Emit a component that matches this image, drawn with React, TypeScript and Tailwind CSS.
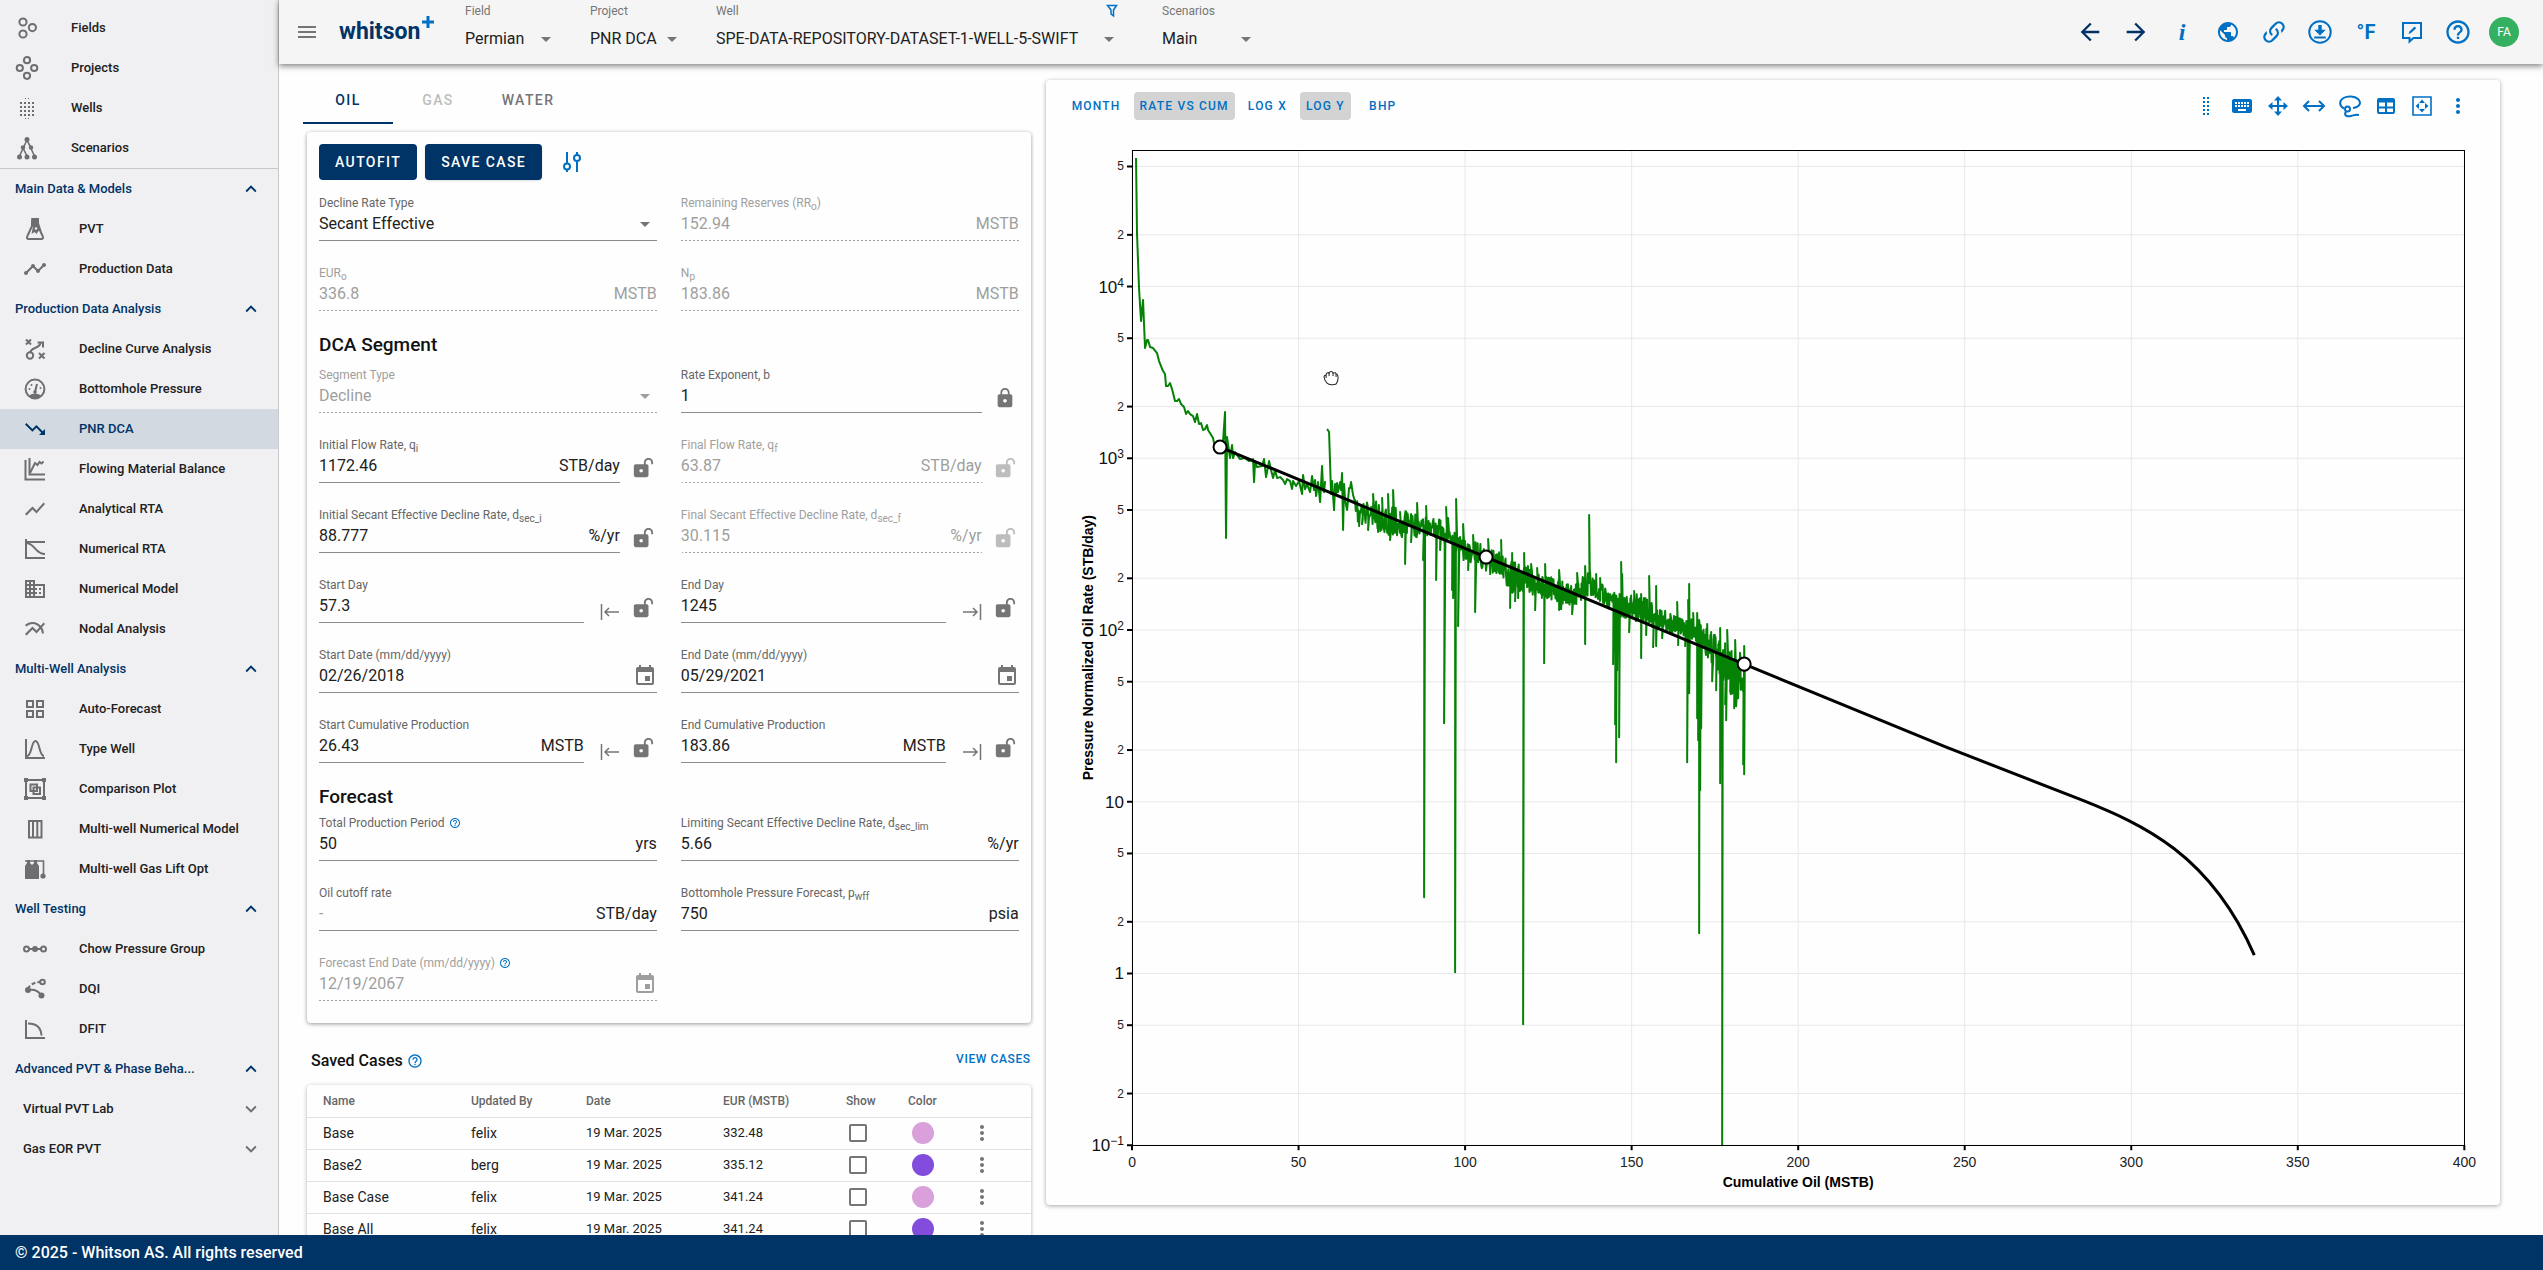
import React, { useId, useState } from 'react'
import {
  MdArrowBack,
  MdArrowDropDown,
  MdArrowForward,
  MdEvent,
  MdExpandLess,
  MdExpandMore,
  MdHelpOutline,
  MdKeyboard,
  MdLock,
  MdMenu,
  MdMoreVert,
  MdMultilineChart,
  MdPublic,
  MdShowChart,
  MdTimeline,
  MdTrendingDown,
  MdOutlineDomain,
} from 'react-icons/md'

/* ---------- icons ---------- */

interface IconProps {
  size?: number
  className?: string
  children: React.ReactNode
}

function Icon({ size = 24, className = '', children }: IconProps) {
  return (
    <svg viewBox="0 0 24 24" width={size} height={size} className={`shrink-0 ${className}`} fill="none" stroke="currentColor" strokeWidth="2" aria-hidden="true">
      {children}
    </svg>
  )
}

const FieldsIcon = () => (
  <Icon>
    <circle cx="8" cy="6" r="3.6" />
    <circle cx="17.4" cy="11.6" r="3.6" />
    <circle cx="8" cy="18" r="3.6" />
  </Icon>
)

const ProjectsIcon = () => (
  <Icon>
    <circle cx="12" cy="4.2" r="3.1" />
    <circle cx="4.8" cy="12" r="3.1" />
    <circle cx="19.2" cy="12" r="3.1" />
    <circle cx="12" cy="19.8" r="3.1" />
  </Icon>
)

const WellsIcon = () => (
  <Icon>
    <g fill="currentColor" stroke="none">
      {[5, 9, 13, 17].map((y) =>
        [5, 9, 13, 17].map((x) => <rect key={`${x}-${y}`} x={x} y={y + 1} width="2" height="2" />)
      )}
      <rect x="10" y="2" width="1" height="1" />
      <rect x="13" y="2" width="1" height="1" />
      <rect x="10" y="22" width="1" height="1" />
      <rect x="13" y="22" width="1" height="1" />
    </g>
  </Icon>
)

const ScenariosIcon = () => (
  <Icon>
    <path d="M12 4 4.500 20M12 4l7.500 16M8 12l4 8M16 12l-4-8" strokeWidth="1.600" />
    <g fill="currentColor" stroke="none">
      <circle cx="12" cy="3.500" r="2.500" />
      <circle cx="8" cy="11.500" r="2.200" />
      <circle cx="16" cy="11.500" r="2.200" />
      <circle cx="4.500" cy="21" r="2.500" />
      <circle cx="12" cy="21" r="2.500" />
      <circle cx="19.500" cy="21" r="2.500" />
    </g>
  </Icon>
)

const FlaskIcon = () => (
  <Icon>
    <path d="M9 3v6L4.200 19.500A1.600 1.600 0 0 0 5.600 22h12.800a1.600 1.600 0 0 0 1.400-2.500L15 9V3" />
    <path d="M8 1h8v5l2.500 8h-3l-2 3-2-2-3 2 1.500-8z" fill="currentColor" stroke="none" />
    <circle cx="13" cy="11.500" r="1.200" fill="#f0f0f2" stroke="none" />
  </Icon>
)

const StrategyIcon = () => (
  <Icon>
    <circle cx="7" cy="18.500" r="3.200" />
    <path d="M3 2.500l5 5M8 2.500l-5 5M16 16l5.500 5.500M21.500 16 16 21.500" />
    <path d="M7.500 15c.5-5 9-3 10-9" />
    <path d="M14.500 5.500h5.500v5" />
  </Icon>
)

const GaugeIcon = () => (
  <Icon>
    <circle cx="12" cy="12" r="9.400" />
    <path d="M12 15l2-8" />
    <path d="M5.500 19c3-3.500 10-3.500 13 0-3 4-10 4-13 0z" fill="currentColor" stroke="none" />
    <g fill="currentColor" stroke="none">
      <circle cx="12" cy="15" r="1.800" />
      <circle cx="6.500" cy="12" r="1" />
      <circle cx="8.500" cy="8" r="1" />
      <circle cx="17.500" cy="11" r="1" />
    </g>
  </Icon>
)

const FlowingIcon = () => (
  <Icon>
    <path d="M2.500 3v19.500H22M6.500 1v16.500H22" />
    <path d="M7 16l5-10 2.500 2 2-3 2 1.500 2-2" />
  </Icon>
)

const NumericalRtaIcon = () => (
  <Icon>
    <path d="M3 2v19h19M3 5h19" />
    <path d="M3 6c9 0 9 11 19 11" />
  </Icon>
)

const GridIcon = () => (
  <Icon>
    <path d="M4 4h6v6H4zM14 4h6v6h-6zM4 14h6v6H4zM14 14h6v6h-6z" />
  </Icon>
)

const BellIcon = () => (
  <Icon>
    <path d="M3 2v19h19" />
    <path d="M4 19c5 0 4-15 8.500-15S16 19 21 19" />
  </Icon>
)

const CompareIcon = () => (
  <Icon>
    <path d="M3 3h18v18H3z" />
    <path d="M7.500 7.500h6.500v6.500H7.500zM10.500 10.500H17V17h-6.500z" />
    <path d="M1 1h4v4H1zM19 1h4v4h-4zM1 19h4v4H1zM19 19h4v4h-4z" fill="currentColor" stroke="none" />
  </Icon>
)

const ColumnsIcon = () => (
  <Icon>
    <path d="M6 4h12.500v16.500H6zM10 4v16.500M14.300 4v16.500" />
  </Icon>
)

const GasLiftIcon = () => (
  <Icon>
    <path d="M2 9l2-3V3h3v3l2 2 2-2V3h3v3l2 3v13H2z" fill="currentColor" stroke="none" />
    <path d="M2 4h18.500v13" strokeWidth="1.600" />
    <circle cx="20" cy="19" r="2.600" fill="currentColor" stroke="none" />
  </Icon>
)

const ChowIcon = () => (
  <Icon>
    <path d="M6 12h12" />
    <circle cx="3.500" cy="12" r="2.500" />
    <circle cx="20.500" cy="12" r="2.500" />
    <circle cx="12" cy="12" r="3" fill="currentColor" stroke="none" />
  </Icon>
)

const DqiIcon = () => (
  <Icon>
    <path d="M5 12c1-4 7-7 12-7" strokeDasharray="4 2" />
    <path d="M5 13c6-1 10 0 13 5" />
    <circle cx="19.500" cy="5" r="2.300" />
    <circle cx="5" cy="13" r="3" fill="currentColor" stroke="none" />
    <circle cx="18.500" cy="18.500" r="3" fill="currentColor" stroke="none" />
  </Icon>
)

const DfitIcon = () => (
  <Icon>
    <path d="M3 3v18h19" />
    <path d="M5 6.500c8 0 13 4 13.500 12" />
  </Icon>
)

const LockOpenIcon = ({ muted = false }: { muted?: boolean }) => (
  <svg viewBox="0 0 24 24" width="22" height="22" className={muted ? 'text-[#bdbdbd]' : 'text-[#757575]'} fill="currentColor" aria-hidden="true">
    <path d="M18 1c-2.760 0-5 2.240-5 5v2H4c-1.100 0-2 .9-2 2v10a2 2 0 0 0 2 2h12a2 2 0 0 0 2-2V10a2 2 0 0 0-2-2h-1V6c0-1.660 1.340-3 3-3s3 1.340 3 3v2h2V6c0-2.760-2.240-5-5-5M10 13a2 2 0 1 1 0 4 2 2 0 0 1 0-4" />
  </svg>
)

const JumpIcon = ({ to }: { to: 'start' | 'end' }) => (
  <svg viewBox="0 0 20 16" width="20" height="16" className="text-[#757575]" fill="none" stroke="currentColor" strokeWidth="1.500" aria-hidden="true">
    {to === 'start' ? <path d="M1.500 0v16M19 8H5M9 4 5 8l4 4" /> : <path d="M18.500 0v16M1 8h14M11 4l4 4-4 4" />}
  </svg>
)

const LinkIcon = () => (
  <Icon size={28}>
    <path
      fill="currentColor"
      stroke="none"
      d="M10.590 13.410c.41.390.41 1.030 0 1.420-.39.390-1.030.390-1.420 0a5.003 5.003 0 0 1 0-7.070l3.540-3.540a5.003 5.003 0 0 1 7.070 0 5.003 5.003 0 0 1 0 7.070l-1.490 1.490c.01-.82-.12-1.640-.4-2.420l.47-.48a2.982 2.982 0 0 0 0-4.240 2.982 2.982 0 0 0-4.240 0l-3.530 3.530a2.982 2.982 0 0 0 0 4.240m2.820-4.240c.39-.39 1.030-.39 1.420 0a5.003 5.003 0 0 1 0 7.070l-3.540 3.540a5.003 5.003 0 0 1-7.070 0 5.003 5.003 0 0 1 0-7.070l1.490-1.490c-.01.82.12 1.640.4 2.430l-.47.470a2.982 2.982 0 0 0 0 4.240 2.982 2.982 0 0 0 4.240 0l3.530-3.530a2.982 2.982 0 0 0 0-4.240.973.973 0 0 1 0-1.420z"
    />
  </Icon>
)

const DownloadIcon = () => (
  <Icon size={28}>
    <circle cx="12" cy="12" r="9.200" strokeWidth="1.700" />
    <path d="M10.500 6h3v4H17l-5 5-5-5h3.500zM7 15.800h10v1.800H7z" fill="currentColor" stroke="none" />
  </Icon>
)

const FeedbackIcon = () => (
  <Icon size={24}>
    <path d="M3 3h18v15h-7.500L9.500 21.500V18H3z" />
    <path d="M8.500 14l1-2.500 5-5 1.700 1.700-5.200 4.800z" fill="currentColor" stroke="none" />
  </Icon>
)

const TuneIcon = () => (
  <Icon>
    <path d="M7 2v11M7 20v2M17 2v3M17 11v11" />
    <circle cx="7" cy="16.500" r="3" />
    <circle cx="17" cy="8" r="3" />
  </Icon>
)

const FilterIcon = () => (
  <svg viewBox="0 0 12 14" width="12" height="14" fill="none" stroke="#0070c4" strokeWidth="1.500" aria-hidden="true">
    <path d="M1.500 1.500h9L7.500 6v6L5 10V6z" />
  </svg>
)

const DragIcon = () => (
  <Icon>
    <g fill="currentColor" stroke="none">
      {[3, 7, 11, 15, 19].map((y) => [9, 13].map((x) => <rect key={`${x}-${y}`} x={x} y={y} width="2" height="2" />))}
    </g>
  </Icon>
)

const MoveIcon = () => (
  <Icon>
    <path d="M12 4v16M4 12h16" />
    <path d="M12 2l4 4.500H8zM12 22l4-4.500H8zM2 12l4.500-4v8zM22 12l-4.500-4v8z" fill="currentColor" stroke="none" />
  </Icon>
)

const HorizontalIcon = () => (
  <Icon>
    <path d="M2.500 12h19M7 7l-5 5 5 5M17 7l5 5-5 5" />
  </Icon>
)

const LassoIcon = () => (
  <Icon>
    <path d="M6 14.500C1 12 1 6.500 5.500 4s11-2 14.500 1 2.500 8-5 9" />
    <circle cx="9.500" cy="15" r="2.500" />
    <path d="M8 17.500c-2.500 4 1 5.500 5 4.500s4-1.500 8-1" />
  </Icon>
)

const TableIcon = () => (
  <Icon>
    <path fillRule="evenodd" fill="currentColor" stroke="none" d="M5 4h14a2 2 0 0 1 2 2v12a2 2 0 0 1-2 2H5a2 2 0 0 1-2-2V6a2 2 0 0 1 2-2zm0 4.500v4h6v-4zm8 0v4h6v-4zm-8 6V18h6v-3.500zm8 0V18h6v-3.500z" />
  </Icon>
)

const FitIcon = () => (
  <Icon>
    <path d="M3 3h18v18H3z" strokeWidth="1.600" />
    <path d="M12 5.500l3 3.500H9zM12 18.500l3-3.500H9zM5.500 12L9 9v6zM18.500 12L15 9v6z" fill="currentColor" stroke="none" />
  </Icon>
)

/* ---------- sidebar ---------- */

interface NavItem {
  label: string
  icon: React.ReactNode
}

interface NavGroup {
  title: string
  items: NavItem[]
}

const topItems: NavItem[] = [
  { label: 'Fields', icon: <FieldsIcon /> },
  { label: 'Projects', icon: <ProjectsIcon /> },
  { label: 'Wells', icon: <WellsIcon /> },
  { label: 'Scenarios', icon: <ScenariosIcon /> },
]

const groups: NavGroup[] = [
  {
    title: 'Main Data & Models',
    items: [
      { label: 'PVT', icon: <FlaskIcon /> },
      { label: 'Production Data', icon: <MdTimeline size={24} /> },
    ],
  },
  {
    title: 'Production Data Analysis',
    items: [
      { label: 'Decline Curve Analysis', icon: <StrategyIcon /> },
      { label: 'Bottomhole Pressure', icon: <GaugeIcon /> },
      { label: 'PNR DCA', icon: <MdTrendingDown size={24} /> },
      { label: 'Flowing Material Balance', icon: <FlowingIcon /> },
      { label: 'Analytical RTA', icon: <MdShowChart size={24} /> },
      { label: 'Numerical RTA', icon: <NumericalRtaIcon /> },
      { label: 'Numerical Model', icon: <MdOutlineDomain size={24} /> },
      { label: 'Nodal Analysis', icon: <MdMultilineChart size={24} /> },
    ],
  },
  {
    title: 'Multi-Well Analysis',
    items: [
      { label: 'Auto-Forecast', icon: <GridIcon /> },
      { label: 'Type Well', icon: <BellIcon /> },
      { label: 'Comparison Plot', icon: <CompareIcon /> },
      { label: 'Multi-well Numerical Model', icon: <ColumnsIcon /> },
      { label: 'Multi-well Gas Lift Opt', icon: <GasLiftIcon /> },
    ],
  },
  {
    title: 'Well Testing',
    items: [
      { label: 'Chow Pressure Group', icon: <ChowIcon /> },
      { label: 'DQI', icon: <DqiIcon /> },
      { label: 'DFIT', icon: <DfitIcon /> },
    ],
  },
]

function GroupHeader({ title }: { title: string }) {
  return (
    <button className="flex h-10 w-full items-center justify-between pr-4 pl-[15px] text-left text-[#003366]">
      {title}
      <MdExpandLess size={22} />
    </button>
  )
}

function Sidebar() {
  const active = 'PNR DCA'
  return (
    <nav className="w-[279px] shrink-0 overflow-hidden border-r border-[#c8c8ca] bg-[#f0f0f2] text-[13px] font-medium text-[#212121]">
      <div className="border-b border-[#c8c8ca] pt-2">
        {topItems.map((item) => (
          <a key={item.label} href="#" className="flex h-10 items-center gap-8 pl-[15px]">
            <span className="text-[#6e6e70]">{item.icon}</span>
            {item.label}
          </a>
        ))}
      </div>
      {groups.map((group) => (
        <div key={group.title}>
          <GroupHeader title={group.title} />
          {group.items.map((item) => (
            <a
              key={item.label}
              href="#"
              className={`flex h-10 items-center gap-8 pl-[23px] ${item.label === active ? 'bg-[#d2d9e1] text-[#003366]' : ''}`}
            >
              <span className={item.label === active ? '' : 'text-[#6e6e70]'}>{item.icon}</span>
              {item.label}
            </a>
          ))}
        </div>
      ))}
      <GroupHeader title="Advanced PVT & Phase Beha..." />
      {['Virtual PVT Lab', 'Gas EOR PVT'].map((label) => (
        <button key={label} className="flex h-10 w-full items-center justify-between pr-4 pl-[23px] text-left">
          {label}
          <MdExpandMore size={22} className="text-[#6e6e70]" />
        </button>
      ))}
    </nav>
  )
}

/* ---------- header ---------- */

interface HeaderSelectProps {
  label: string
  value: string
  className: string
  filter?: boolean
}

function HeaderSelect({ label, value, className, filter }: HeaderSelectProps) {
  const id = useId()
  return (
    <div className={`self-start ${className}`}>
      <div className="flex h-[22px] items-center justify-between pr-[3px]">
        <label htmlFor={id} className="text-xs text-[#757575]">{label}</label>
        {filter && <FilterIcon />}
      </div>
      <div className="flex h-[34px] items-center">
        <select id={id} className="min-w-0 flex-1 appearance-none bg-transparent text-base text-[#212121]">
          <option>{value}</option>
        </select>
        <MdArrowDropDown size={24} className="pointer-events-none shrink-0 text-[#757575]" />
      </div>
    </div>
  )
}

const headerActions = [
  { name: 'Back', icon: <MdArrowBack size={28} className="text-[#003366]" /> },
  { name: 'Forward', icon: <MdArrowForward size={28} className="text-[#003366]" /> },
  { name: 'Info', icon: <span className="font-['Liberation_Serif',serif] text-2xl font-bold italic">i</span> },
  { name: 'Language', icon: <MdPublic size={24} /> },
  { name: 'Copy link', icon: <LinkIcon /> },
  { name: 'Download', icon: <DownloadIcon /> },
  { name: 'Units', icon: <span className="text-xl font-bold">°F</span> },
  { name: 'Feedback', icon: <FeedbackIcon /> },
  { name: 'Help', icon: <MdHelpOutline size={28} /> },
]

function Header() {
  return (
    <header className="z-10 flex h-16 shrink-0 items-center bg-[#f5f5f5] pr-6 pl-4 shadow-[0_2px_6px_rgba(0,0,0,0.5)]">
      <button aria-label="Toggle menu" className="text-[#757575]">
        <MdMenu size={24} />
      </button>
      <a href="#" className="ml-5 flex w-[126px] items-center text-[23px] font-bold text-[#003366]">
        whitson
        <svg viewBox="0 0 12 12" width="12" height="12" className="mb-5 ml-0.5" stroke="#0070c4" strokeWidth="3" aria-hidden="true">
          <path d="M6 0v12M0 6h12" />
        </svg>
      </a>
      <div className="flex h-full gap-8">
        <HeaderSelect label="Field" value="Permian" className="w-[93px]" />
        <HeaderSelect label="Project" value="PNR DCA" className="w-[94px]" />
        <HeaderSelect label="Well" value="SPE-DATA-REPOSITORY-DATASET-1-WELL-5-SWIFT" className="w-[405px]" filter />
        <HeaderSelect label="Scenarios" value="Main" className="ml-[9px] w-24" />
      </div>
      <div className="ml-auto flex items-center text-[#0070c4]">
        {headerActions.map((action) => (
          <button key={action.name} aria-label={action.name} className="flex w-[46px] items-center justify-center">
            {action.icon}
          </button>
        ))}
        <button aria-label="Account" className="ml-2 flex size-[30px] items-center justify-center rounded-full bg-[#34b060] text-xs text-white">
          FA
        </button>
      </div>
    </header>
  )
}

/* ---------- decline form ---------- */

interface FieldProps {
  label: React.ReactNode
  value?: string
  placeholder?: string
  unit?: string
  disabled?: boolean
  help?: boolean
  select?: boolean
  calendar?: boolean
  lock?: 'open' | 'closed'
  jump?: 'start' | 'end'
}

function Field({ label, value = '', placeholder, unit, disabled, help, select, calendar, lock, jump }: FieldProps) {
  const id = useId()
  const [text, setText] = useState(value)
  const border = disabled
    ? 'border-b [border-image:repeating-linear-gradient(90deg,#9e9e9e_0px,#9e9e9e_2px,transparent_2px,transparent_4px)_1_repeat]'
    : 'border-b border-[#8c8c8c]'
  const tone = disabled ? 'text-[#9e9e9e]' : 'text-[#212121]'

  return (
    <div className="mb-[22px] flex items-end">
      <div className="min-w-0 flex-1">
        <div className={`flex h-5 items-center gap-1 text-xs ${disabled ? 'text-[#9e9e9e]' : 'text-[#666666]'}`}>
          <label htmlFor={id} className="whitespace-nowrap [&_sub]:text-[10px]">{label}</label>
          {help && <MdHelpOutline size={12} className="text-[#0070c4]" />}
        </div>
        <div className={`flex h-7 items-center pb-[5px] ${border} ${tone}`}>
          {select ? (
            <>
              <select id={id} disabled={disabled} className="h-5 min-w-0 flex-1 appearance-none bg-transparent text-base leading-5 opacity-100">
                <option>{value}</option>
              </select>
              <MdArrowDropDown size={24} className={`pointer-events-none shrink-0 ${disabled ? 'text-[#9e9e9e]' : 'text-[#757575]'}`} />
            </>
          ) : (
            <input
              id={id}
              value={text}
              placeholder={placeholder}
              disabled={disabled}
              onChange={(e) => setText(e.target.value)}
              className="h-5 min-w-0 flex-1 bg-transparent text-base leading-5 outline-none placeholder:text-[#9e9e9e]"
            />
          )}
          {unit && <span className="text-base leading-5">{unit}</span>}
          {calendar && (
            <button aria-label="Pick date" disabled={disabled} className={disabled ? 'text-[#9e9e9e]' : 'text-[#757575]'}>
              <MdEvent size={24} />
            </button>
          )}
        </div>
      </div>
      {jump && (
        <button aria-label={`Move to ${jump}`} className="mb-[3px] ml-4">
          <JumpIcon to={jump} />
        </button>
      )}
      {lock && (
        <button aria-label="Lock value" disabled={disabled} className="mr-[3px] mb-1 ml-3">
          {lock === 'open' ? <LockOpenIcon muted={disabled} /> : <MdLock size={22} className="text-[#757575]" />}
        </button>
      )}
    </div>
  )
}

function DeclineForm() {
  return (
    <section className="mt-2 mr-[3px] ml-7 rounded bg-[#fefefe] px-3 pt-3 shadow-[0_1px_4px_rgba(0,0,0,0.4)]">
      <div className="flex items-center gap-2">
        <button className="h-9 rounded bg-[#003366] px-4 text-sm font-medium tracking-widest text-white">AUTOFIT</button>
        <button className="h-9 rounded bg-[#003366] px-4 text-sm font-medium tracking-widest text-white shadow">SAVE CASE</button>
        <button aria-label="Fit settings" className="ml-2.5 text-[#0070c4]">
          <TuneIcon />
        </button>
      </div>

      <div className="mt-[13px] grid grid-cols-2 gap-x-6">
        <Field label="Decline Rate Type" value="Secant Effective" select />
        <Field label={<>Remaining Reserves (RR<sub>o</sub>)</>} value="152.94" unit="MSTB" disabled />
        <Field label={<>EUR<sub>o</sub></>} value="336.8" unit="MSTB" disabled />
        <Field label={<>N<sub>p</sub></>} value="183.86" unit="MSTB" disabled />
      </div>

      <h2 className="mb-2 text-[19px] leading-6 font-medium text-[#111111]">DCA Segment</h2>
      <div className="grid grid-cols-2 gap-x-6">
        <Field label="Segment Type" value="Decline" select disabled />
        <Field label="Rate Exponent, b" value="1" lock="closed" />
        <Field label={<>Initial Flow Rate, q<sub>i</sub></>} value="1172.46" unit="STB/day" lock="open" />
        <Field label={<>Final Flow Rate, q<sub>f</sub></>} value="63.87" unit="STB/day" lock="open" disabled />
        <Field label={<>Initial Secant Effective Decline Rate, d<sub>sec_i</sub></>} value="88.777" unit="%/yr" lock="open" />
        <Field label={<>Final Secant Effective Decline Rate, d<sub>sec_f</sub></>} value="30.115" unit="%/yr" lock="open" disabled />
        <Field label="Start Day" value="57.3" jump="start" lock="open" />
        <Field label="End Day" value="1245" jump="end" lock="open" />
        <Field label="Start Date (mm/dd/yyyy)" value="02/26/2018" calendar />
        <Field label="End Date (mm/dd/yyyy)" value="05/29/2021" calendar />
        <Field label="Start Cumulative Production" value="26.43" unit="MSTB" jump="start" lock="open" />
        <Field label="End Cumulative Production" value="183.86" unit="MSTB" jump="end" lock="open" />
      </div>

      <h2 className="mb-1 text-[19px] leading-6 font-medium text-[#111111]">Forecast</h2>
      <div className="grid grid-cols-2 gap-x-6">
        <Field label="Total Production Period" value="50" unit="yrs" help />
        <Field label={<>Limiting Secant Effective Decline Rate, d<sub>sec_lim</sub></>} value="5.66" unit="%/yr" />
        <Field label="Oil cutoff rate" placeholder="-" unit="STB/day" />
        <Field label={<>Bottomhole Pressure Forecast, p<sub>wff</sub></>} value="750" unit="psia" />
        <Field label="Forecast End Date (mm/dd/yyyy)" value="12/19/2067" calendar help disabled />
      </div>
    </section>
  )
}

/* ---------- saved cases ---------- */

const cases = [
  { name: 'Base', by: 'felix', date: '19 Mar. 2025', eur: '332.48', color: 'bg-[#d9a0dc]' },
  { name: 'Base2', by: 'berg', date: '19 Mar. 2025', eur: '335.12', color: 'bg-[#824cdc]' },
  { name: 'Base Case', by: 'felix', date: '19 Mar. 2025', eur: '341.24', color: 'bg-[#d9a0dc]' },
  { name: 'Base All', by: 'felix', date: '19 Mar. 2025', eur: '341.24', color: 'bg-[#824cdc]' },
]

function SavedCases() {
  return (
    <section className="mt-[22px] mr-[3px] ml-7">
      <div className="flex h-8 items-center justify-between pl-1">
        <h2 className="flex items-center gap-1 text-base font-medium text-[#111111]">
          Saved Cases
          <MdHelpOutline size={16} className="text-[#0070c4]" />
        </h2>
        <button className="pb-1 text-xs font-medium tracking-wider text-[#0070c4]">VIEW CASES</button>
      </div>
      <table className="mt-2 w-full table-fixed rounded bg-[#fefefe] text-left text-[#212121] shadow-[0_1px_4px_rgba(0,0,0,0.3)]">
        <colgroup>
          <col className="w-[148px]" />
          <col className="w-[115px]" />
          <col className="w-[137px]" />
          <col className="w-[123px]" />
          <col className="w-[62px]" />
          <col className="w-[63px]" />
          <col />
        </colgroup>
        <thead className="text-xs text-[#666666]">
          <tr className="h-8 border-b border-[#e0e0e0]">
            <th className="pl-4 font-medium">Name</th>
            <th className="pl-4 font-medium">Updated By</th>
            <th className="pl-4 font-medium">Date</th>
            <th className="pl-4 font-medium">EUR (MSTB)</th>
            <th className="pl-4 font-medium">Show</th>
            <th className="pl-4 font-medium">Color</th>
            <th />
          </tr>
        </thead>
        <tbody>
          {cases.map((c) => (
            <tr key={c.name} className="h-8 border-b border-[#e0e0e0]">
              <td className="pl-4 text-sm">{c.name}</td>
              <td className="pl-4 text-sm">{c.by}</td>
              <td className="pl-4 text-[13px]">{c.date}</td>
              <td className="pl-4 text-[13px]">{c.eur}</td>
              <td className="pl-[19px]">
                <input
                  type="checkbox"
                  aria-label={`Show ${c.name}`}
                  className="block size-[18px] appearance-none rounded-xs border-2 border-[#757575]"
                />
              </td>
              <td className="pl-5">
                <span className={`block size-[22px] rounded-full ${c.color}`} />
              </td>
              <td className="pl-[15px]">
                <button aria-label={`Actions for ${c.name}`} className="block text-[#757575]">
                  <MdMoreVert size={24} />
                </button>
              </td>
            </tr>
          ))}
        </tbody>
      </table>
    </section>
  )
}

/* ---------- chart ---------- */

type Point = [number, number]

const PLOT_W = 1332
const PLOT_H = 995

// Early production, before the noisy boundary dominated part
const early: Point[] = [
  [4, 8], [5, 84], [7, 138], [9, 171], [11, 150], [13, 198], [15, 190], [16, 190], [18, 197], [21, 198], [25, 203],
  [27, 211], [31, 221], [33, 224], [34, 236], [36, 236], [38, 233], [40, 239], [43, 251], [45, 251], [47, 249],
  [49, 254], [52, 257], [54, 264], [56, 261], [58, 264], [61, 266], [63, 272], [65, 264], [67, 274], [69, 273],
  [71, 280], [73, 279], [75, 275], [76, 280], [81, 288], [82, 293], [88, 297], [91, 291], [93, 262], [94, 388],
  [95, 287], [98, 308], [100, 295], [101, 308], [103, 302], [108, 309], [113, 308], [117, 311], [121, 309], [122, 332],
  [123, 312], [125, 317], [130, 316], [132, 309], [134, 327], [137, 311], [139, 320], [141, 328], [143, 320], [145, 328],
  [148, 327], [151, 330], [153, 334], [155, 329], [158, 331], [160, 339], [161, 331], [164, 336], [167, 331], [170, 344],
  [171, 325], [173, 339], [175, 334], [178, 342], [180, 326], [182, 340], [183, 330], [184, 346], [186, 332], [188, 352],
  [190, 316], [191, 340], [192, 342], [193, 331],
]

const restart: Point[] = [
  [195, 279], [197, 282], [199, 344], [200, 331], [202, 360], [203, 334], [204, 345], [205, 333], [206, 342], [208, 332],
  [209, 340], [210, 323], [211, 380], [212, 334], [213, 350], [215, 360], [217, 338], [218, 338], [219, 332], [221, 345],
  [223, 352],
]

// [x, top, bottom] of the scatter band
const band: [number, number, number][] = [
  [223, 350, 374], [241, 350, 380], [261, 357, 386], [278, 361, 388], [295, 364, 386], [311, 371, 393], [328, 384, 411],
  [341, 391, 415], [355, 396, 421], [368, 402, 427], [381, 412, 444], [395, 415, 442], [408, 423, 449], [425, 429, 452],
  [441, 435, 457], [455, 422, 446], [465, 431, 449], [478, 439, 460], [491, 444, 470], [508, 444, 472], [525, 454, 479],
  [541, 465, 485], [555, 467, 490], [568, 473, 496], [578, 480, 518], [591, 490, 534], [601, 496, 550], [613, 501, 540],
]

// isolated peaks and shut-ins
const spikes: Point[] = [
  [227, 376], [230, 374], [236, 380], [241, 344], [246, 382], [250, 348], [256, 344], [258, 390], [261, 340], [268, 362],
  [273, 414], [279, 392], [285, 353], [291, 410], [292, 747], [294, 356], [304, 430], [308, 400], [312, 573], [314, 357],
  [316, 368], [320, 440], [321, 448], [323, 822], [324, 349], [326, 476], [331, 374], [336, 420], [341, 385], [343, 462],
  [356, 389], [358, 424], [369, 390], [378, 458], [380, 403], [383, 451], [386, 448], [391, 874], [392, 403], [399, 414],
  [403, 460], [405, 418], [412, 513], [413, 414], [427, 460], [427, 420], [429, 459], [440, 464], [445, 423], [453, 494],
  [453, 416], [456, 424], [457, 365], [458, 422], [464, 424], [468, 428], [481, 514], [482, 500], [483, 574], [484, 612],
  [485, 520], [487, 587], [488, 450], [489, 412], [490, 424], [497, 482], [502, 441], [509, 508], [509, 444], [514, 485],
  [517, 426], [521, 497], [524, 436], [524, 496], [530, 488], [545, 452], [546, 495], [553, 496], [555, 612], [556, 450],
  [557, 434], [557, 543], [561, 463], [565, 463], [565, 568], [566, 590], [567, 783], [567, 470], [568, 640], [569, 578],
  [575, 474], [580, 531], [584, 540], [588, 478], [588, 633], [589, 520], [590, 995], [591, 530], [593, 554], [594, 570],
  [595, 480], [598, 541], [602, 558], [603, 490], [604, 556], [606, 548], [611, 614], [612, 496], [612, 624],
]

function bandAt(x: number): Point {
  const i = Math.max(1, band.findIndex((b) => b[0] >= x))
  const a = band[i - 1]
  const b = band[i]
  const t = (x - a[0]) / (b[0] - a[0])
  return [a[1] + (b[1] - a[1]) * t, a[2] + (b[2] - a[2]) * t]
}

function buildNoise(): Point[] {
  const points: Point[] = []
  let seed = 11
  const random = () => {
    seed = (seed * 16807) % 2147483647
    return seed / 2147483647
  }
  let next = 0
  for (let x = 223; x < 613; x += x < 360 ? 0.7 : 0.4) {
    const [top, bottom] = bandAt(x)
    points.push([x, top + (bottom - top) * random()])
    while (next < spikes.length && spikes[next][0] <= x) {
      points.push(spikes[next])
      next += 1
    }
  }
  return points
}

const toPath = (points: Point[]) => points.map(([x, y], i) => `${i ? 'L' : 'M'}${x.toFixed(1)} ${y.toFixed(1)}`).join('')

const rateY = (rate: number) => PLOT_H - 171.7 * (Math.log10(rate) + 1)

const decades = [
  { value: 0.1, base: '10', exp: '−1' },
  { value: 1, base: '1', exp: '' },
  { value: 10, base: '10', exp: '' },
  { value: 100, base: '10', exp: '2' },
  { value: 1000, base: '10', exp: '3' },
  { value: 10000, base: '10', exp: '4' },
]

const xTicks = [0, 50, 100, 150, 200, 250, 300, 350, 400]

function RateChart() {
  const noise = buildNoise()
  return (
    <svg viewBox="-86 -19 1454 1074" className="block w-full font-['Liberation_Sans',Arial,sans-serif]" role="img" aria-label="Pressure normalized oil rate against cumulative oil">
      {xTicks.map((v) => (
        <g key={v}>
          <path d={`M${(v / 400) * PLOT_W} 0V${PLOT_H}`} stroke="#e8e8e8" />
          <path d={`M${(v / 400) * PLOT_W} ${PLOT_H}v5`} stroke="#000" strokeWidth="2" />
          <text x={(v / 400) * PLOT_W} y={PLOT_H + 22} fontSize="14" textAnchor="middle" fill="#222">{v}</text>
        </g>
      ))}
      {decades.map((d) => (
        <g key={d.value}>
          {[1, 2, 5].map((m) => (
            <g key={m}>
              <path d={`M0 ${rateY(d.value * m)}H${PLOT_W}`} stroke="#e8e8e8" />
              <path d={`M-5 ${rateY(d.value * m)}h5`} stroke="#000" strokeWidth="2" />
              {m > 1 && (
                <text x="-8" y={rateY(d.value * m) + 4} fontSize="12" textAnchor="end" fill="#222">{m}</text>
              )}
            </g>
          ))}
          <text x="-8" y={rateY(d.value) + 6} fontSize="17" textAnchor="end" fill="#111">
            {d.base}
            {d.exp && <tspan fontSize="12" dy="-6">{d.exp}</tspan>}
          </text>
        </g>
      ))}

      <g fill="none" stroke="#058205" strokeWidth="2" strokeLinejoin="round">
        <path d={toPath(early)} />
        <path d={toPath([...restart, ...noise])} />
      </g>
      <path d={`M0 0H${PLOT_W}V${PLOT_H}H0z`} fill="none" stroke="#000" shapeRendering="crispEdges" />

      <path d="M88 297 354 407 612 514 814 597 950 650C1010 674 1078 704 1122 805" fill="none" stroke="#000" strokeWidth="3" />
      <g fill="#fff" stroke="#000" strokeWidth="2">
        <circle cx="88" cy="297" r="6.500" />
        <circle cx="354" cy="407" r="6.500" />
        <circle cx="612" cy="514" r="6.500" />
      </g>

      {/* grab cursor */}
      <path
        d="M195 233c-2-2-3-4-3-6 0-1 1-2 2-2 0-2 2-3 3-2 1-2 3-2 4 0 2-1 3 0 3 1 2 0 2 2 2 4 0 3-1 4-2 6-2 1-7 1-9-1z"
        fill="#fff"
        stroke="#222"
      />
      <path d="M194 225v3M197 223v3M201 223v3M204 224v3" stroke="#222" fill="none" />

      <text x={PLOT_W / 2} y={PLOT_H + 42} fontSize="14" fontWeight="700" textAnchor="middle">Cumulative Oil (MSTB)</text>
      <text transform={`translate(-39 ${PLOT_H / 2}) rotate(-90)`} fontSize="14" fontWeight="700" textAnchor="middle">
        Pressure Normalized Oil Rate (STB/day)
      </text>
    </svg>
  )
}

const chartModes = [
  { label: 'MONTH', on: false },
  { label: 'RATE VS CUM', on: true },
  { label: 'LOG X', on: false },
  { label: 'LOG Y', on: true },
  { label: 'BHP', on: false },
]

const chartTools = [
  { name: 'Drag', icon: <DragIcon /> },
  { name: 'Shortcuts', icon: <MdKeyboard size={24} /> },
  { name: 'Pan', icon: <MoveIcon /> },
  { name: 'Pan horizontally', icon: <HorizontalIcon /> },
  { name: 'Lasso', icon: <LassoIcon /> },
  { name: 'Table', icon: <TableIcon /> },
  { name: 'Fit to data', icon: <FitIcon /> },
  { name: 'More', icon: <MdMoreVert size={24} /> },
]

function ChartCard() {
  return (
    <section className="mt-4 mr-[43px] ml-3 flex-1 self-start rounded bg-[#fefefe] shadow-[0_1px_4px_rgba(0,0,0,0.35)]">
      <div className="flex h-[51px] items-center justify-between pt-px pr-6 pl-5 text-[#0070c4]">
        <div className="flex gap-[7px]">
          {chartModes.map((mode) => (
            <button
              key={mode.label}
              aria-pressed={mode.on}
              className={`h-7 min-w-[50px] rounded px-[6px] text-xs font-medium tracking-widest ${mode.on ? 'bg-[#d3d3d3]' : ''}`}
            >
              {mode.label}
            </button>
          ))}
        </div>
        <div className="flex">
          {chartTools.map((tool) => (
            <button key={tool.name} aria-label={tool.name} className="flex w-9 justify-center">
              {tool.icon}
            </button>
          ))}
        </div>
      </div>
      <RateChart />
    </section>
  )
}

/* ---------- page ---------- */

const tabs = [
  { label: 'OIL', style: 'border-[#003366] text-[#003366]' },
  { label: 'GAS', style: 'border-transparent text-[#bdbdbd]' },
  { label: 'WATER', style: 'border-transparent text-[#757575]' },
]

export default function App() {
  return (
    <div className="flex h-screen flex-col overflow-hidden bg-[#fefefe] font-[Roboto,sans-serif]">
      <div className="flex min-h-0 flex-1">
        <Sidebar />
        <div className="flex min-w-0 flex-1 flex-col">
          <Header />
          <main className="flex min-h-0 flex-1 overflow-hidden">
            <div className="w-1/3 shrink-0 overflow-hidden pt-3">
              <div role="tablist" className="ml-6 flex">
                {tabs.map((tab) => (
                  <button
                    key={tab.label}
                    role="tab"
                    aria-selected={tab.label === 'OIL'}
                    disabled={tab.label === 'GAS'}
                    className={`h-12 w-[90px] border-b-2 pt-0.5 text-sm font-medium tracking-widest ${tab.style}`}
                  >
                    {tab.label}
                  </button>
                ))}
              </div>
              <DeclineForm />
              <SavedCases />
            </div>
            <ChartCard />
          </main>
        </div>
      </div>
      <footer className="flex h-[35px] shrink-0 items-center bg-[#003366] pl-[15px] text-base font-medium text-white">
        © 2025 - Whitson AS. All rights reserved
      </footer>
    </div>
  )
}
